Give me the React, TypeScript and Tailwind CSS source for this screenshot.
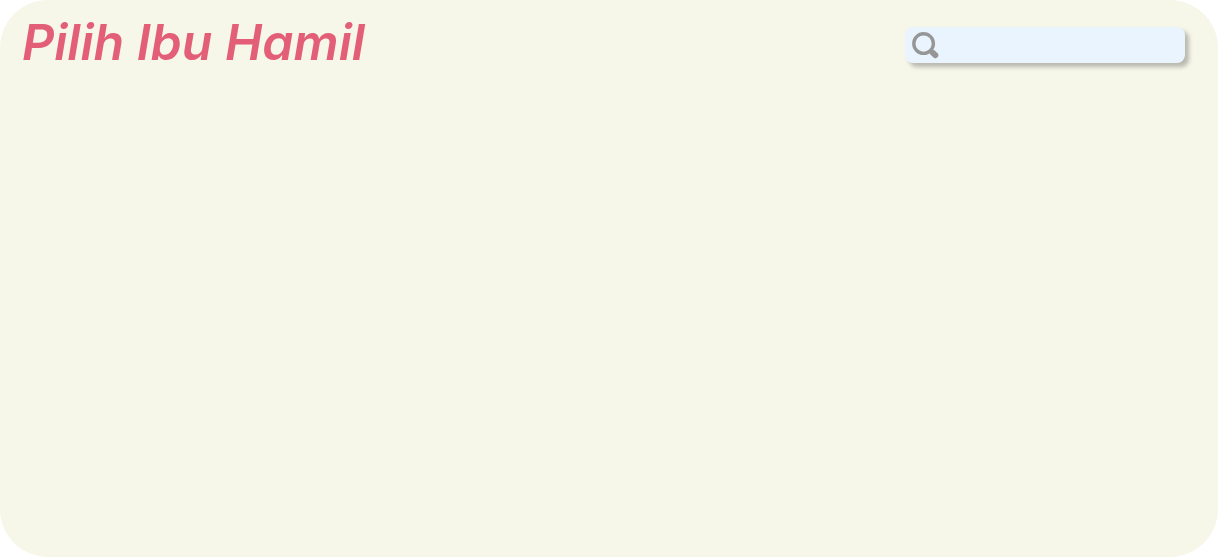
export default function App() {
  return (
    <main className="flex min-h-screen flex-col rounded-[48px] bg-[#f6f6e9] font-['Inter',sans-serif]">
      <header className="flex items-center justify-between pt-3 pr-[33px] pl-[22px]">
        <h1 className="text-[50px] leading-[60px] font-semibold text-[#e35f77] italic">Pilih Ibu Hamil</h1>
        <search className="mt-1.5 flex h-9 w-[280px] items-center gap-2 rounded-lg bg-[#e9f4ff] px-1.5 shadow-[4px_4px_4px_rgba(0,0,0,0.25)]">
          <svg className="h-7 w-7 shrink-0" viewBox="0 0 28 28" fill="none" stroke="#969696" aria-hidden="true">
            <circle cx="12.6" cy="12.6" r="9.8" strokeWidth="3.4" />
            <path d="M19 19 22 22" strokeWidth="4.4" />
            <path d="M21.9 21.9 24.3 24.2" strokeWidth="6" strokeLinecap="round" />
          </svg>
          <input
            type="search"
            aria-label="Cari ibu hamil"
            className="min-w-0 flex-1 bg-transparent text-base text-gray-700 outline-none"
          />
        </search>
      </header>
    </main>
  );
}
